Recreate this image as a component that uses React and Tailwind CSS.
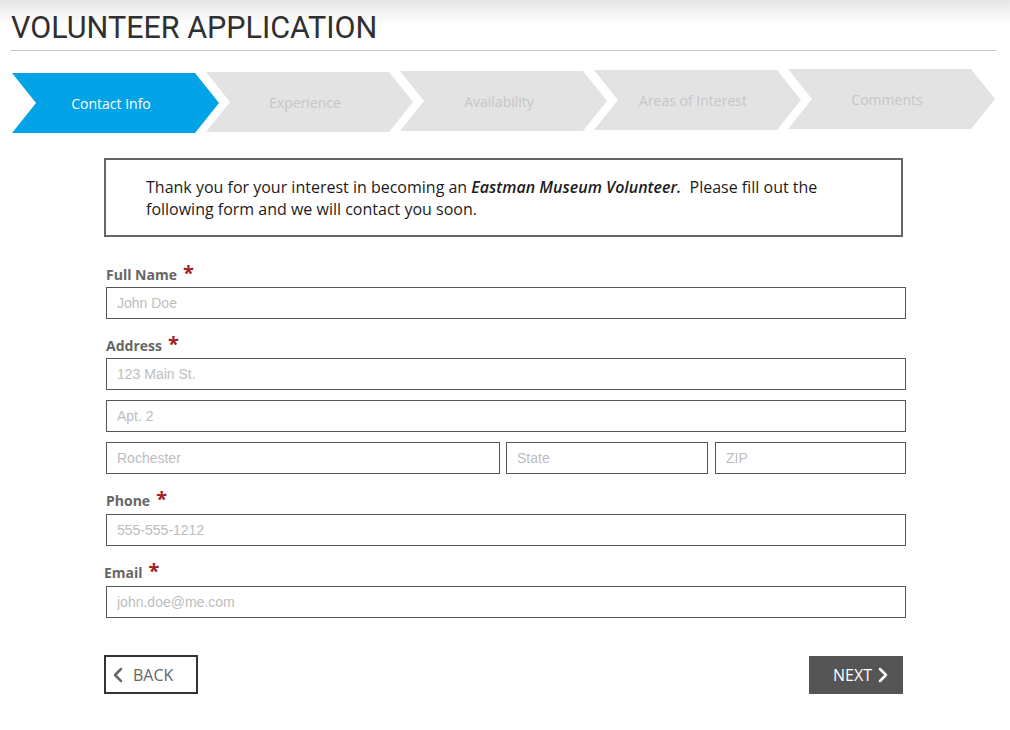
import { ChevronLeft, ChevronRight } from 'lucide-react'

const STEPS = ['Contact Info', 'Experience', 'Availability', 'Areas of Interest', 'Comments']
const STEP_OFFSETS = ['mt-[4px]', 'mt-[3px]', 'mt-[2px]', 'mt-[1px]', 'mt-0']

function Step({ label, active, index }) {
  return (
    <div
      className={`${STEP_OFFSETS[index]} ${index > 0 ? '-ml-[13px]' : ''} w-[207px] h-[60px] shrink-0 flex items-center justify-center pl-[13px] pr-[22px] text-[14px] ${
        active ? 'bg-[#03a3e8] text-white' : 'bg-[#e3e3e3] text-[#c6c6c6]'
      }`}
      style={{ clipPath: 'polygon(0 0, 183px 0, 207px 50%, 183px 100%, 0 100%, 24px 50%)' }}
    >
      {label}
    </div>
  )
}

function Label({ children, className = '' }) {
  return (
    <div className={`flex items-start h-[20px] text-[14px] leading-[20px] font-bold text-[#666] ${className}`}>
      <span>{children}</span>
      <span className="ml-[6px] text-[20px] leading-[16px] text-[#a51d22] font-bold">*</span>
    </div>
  )
}

function Field({ placeholder, className = '' }) {
  return (
    <input
      className={`h-[32px] border border-[#555] bg-white px-[10px] text-[14px] text-[#333] placeholder:text-[#bdbdbd] outline-none ${className}`}
      style={{ fontFamily: '"Liberation Sans", Arial, sans-serif' }}
      placeholder={placeholder}
    />
  )
}

export default function App() {
  return (
    <div className="w-[1010px] h-[730px] bg-white overflow-hidden" style={{ fontFamily: '"Open Sans", sans-serif' }}>
      {/* header */}
      <div className="bg-gradient-to-b from-[#e6e6e6] via-white to-white">
        <div className="mx-[11px] mr-[14px] pt-[10px] pb-[4px] border-b border-[#c4c4c4]">
          <h1 className="text-[30.5px] leading-[36px] text-[#303030]" style={{ fontFamily: 'Roboto, sans-serif' }}>
            VOLUNTEER APPLICATION
          </h1>
        </div>
      </div>

      {/* steps */}
      <div className="flex items-start pl-[12px] mt-[18px] h-[64px]">
        {STEPS.map((s, i) => (
          <Step key={s} label={s} index={i} active={i === 0} />
        ))}
      </div>

      <div className="ml-[104px] w-[802px]">
        {/* intro */}
        <div className="mt-[25px] w-[799px] h-[79px] border-2 border-[#666] pl-[40px] pr-[60px] pt-[16px] text-[16px] leading-[22px] text-[#1c1c1c]">
          Thank you for your interest in becoming an <em className="font-semibold">Eastman Museum Volunteer.</em>&nbsp; Please fill out the following form and we will contact you soon.
        </div>

        {/* form */}
        <div className="pl-[2px] flex flex-col">
          <Label className="mt-[28px] mb-[2px]">Full Name</Label>
          <Field placeholder="John Doe" className="w-[800px]" />

          <Label className="mt-[17px] mb-[2px]">Address</Label>
          <Field placeholder="123 Main St." className="w-[800px]" />
          <Field placeholder="Apt. 2" className="w-[800px] mt-[10px]" />
          <div className="flex mt-[10px] w-[800px]">
            <Field placeholder="Rochester" className="w-[394px]" />
            <Field placeholder="State" className="w-[202px] ml-[6px]" />
            <Field placeholder="ZIP" className="w-[191px] ml-[7px]" />
          </div>

          <Label className="mt-[17px] mb-[3px]">Phone</Label>
          <Field placeholder="555-555-1212" className="w-[800px]" />

          <Label className="mt-[17px] mb-[3px] -ml-[2px]">Email</Label>
          <Field placeholder="john.doe@me.com" className="w-[800px]" />
        </div>

        {/* buttons */}
        <div className="flex justify-between items-start mt-[37px] w-[799px]">
          <button className="w-[94px] h-[39px] border-2 border-[#333] flex items-center text-[16px] text-[#666]">
            <ChevronLeft size={24} strokeWidth={2.5} />
            <span className="ml-[3px]">BACK</span>
          </button>
          <button className="mt-[1px] w-[94px] h-[38px] bg-[#555] flex items-center pl-[24px] text-[16px] text-white">
            <span>NEXT</span>
            <ChevronRight size={24} strokeWidth={2.5} className="-ml-[1px]" />
          </button>
        </div>
      </div>
    </div>
  )
}
